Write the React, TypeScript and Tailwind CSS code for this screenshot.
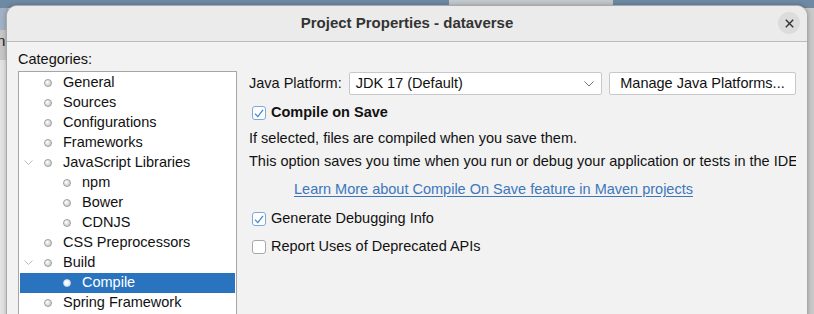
import React from "react";

const font = { fontFamily: '"Liberation Sans", Arial, sans-serif' };

type Node = { label: string; depth: 0 | 1; expandable?: boolean; selected?: boolean };

const nodes: Node[] = [
  { label: "General", depth: 0 },
  { label: "Sources", depth: 0 },
  { label: "Configurations", depth: 0 },
  { label: "Frameworks", depth: 0 },
  { label: "JavaScript Libraries", depth: 0, expandable: true },
  { label: "npm", depth: 1 },
  { label: "Bower", depth: 1 },
  { label: "CDNJS", depth: 1 },
  { label: "CSS Preprocessors", depth: 0 },
  { label: "Build", depth: 0, expandable: true },
  { label: "Compile", depth: 1, selected: true },
  { label: "Spring Framework", depth: 0 },
];

const Bullet = ({ light }: { light?: boolean }) => (
  <span
    className={
      light
        ? "block h-[8px] w-[8px] shrink-0 rounded-full border border-[#c9d8e8] bg-[radial-gradient(circle_at_35%_35%,#ffffff,#e4e9ef)]"
        : "block h-[8px] w-[8px] shrink-0 rounded-full border border-[#9c9c9c] bg-[radial-gradient(circle_at_35%_35%,#ffffff,#bcbcbc)]"
    }
  />
);

const Chevron = () => (
  <svg width="9" height="6" viewBox="0 0 9 6" className="block">
    <path d="M0.5 0.5 L4.5 4.5 L8.5 0.5" fill="none" stroke="#bdbdbd" strokeWidth="1" />
  </svg>
);

const TreeRow = ({ node }: { node: Node }) => (
  <div
    className={
      "flex h-[20px] items-center " +
      (node.selected ? "bg-[#2a74bf] text-white" : "text-[#111]")
    }
  >
    <span className="flex w-[24px] shrink-0 pl-[4px]">{node.expandable ? <Chevron /> : null}</span>
    <span className={node.depth === 1 ? "ml-[19px] flex" : "flex"}>
      <Bullet light={node.selected} />
    </span>
    <span className="ml-[11px] whitespace-nowrap">{node.label}</span>
  </div>
);

const CheckBox = ({ checked }: { checked?: boolean }) => (
  <span
    className={
      "flex h-[14px] w-[14px] items-center justify-center rounded-[3px] border bg-white " +
      (checked ? "border-[#7aa8dc]" : "border-[#a8a8a8]")
    }
  >
    {checked && (
      <svg width="10" height="9" viewBox="0 0 10 9">
        <path d="M1 4.6 L3.8 7.6 L9 0.8" fill="none" stroke="#3f86d6" strokeWidth="1.3" />
      </svg>
    )}
  </span>
);

export default function App() {
  return (
    <div className="relative h-[314px] w-[814px] overflow-hidden bg-[#cfcfcf] text-[14.5px]" style={font}>
      {/* desktop behind the dialog */}
      <div className="absolute left-0 top-0 h-[8px] w-full bg-[#6e89a4]" />
      <div className="absolute left-[449px] top-0 h-[8px] w-[164px] border-b-2 border-[#2d5f95] bg-[#c3c8cd]" />
      <div className="absolute left-0 top-[8px] h-[22px] w-[8px] bg-[#9fb1c3]" />
      <div className="absolute left-0 top-[30px] h-[30px] w-[8px] bg-[#c6c6c6]">
        <span className="absolute left-[-3px] top-[3px] text-[15px] leading-none text-[#222]">n</span>
      </div>
      <div className="absolute left-0 top-[60px] h-[254px] w-[8px] bg-[#e2e2e2]" />
      <div className="absolute right-0 top-[8px] h-[306px] w-[7px] bg-[#c9c9c9]" />

      {/* dialog window */}
      <div className="absolute left-[6px] top-[5px] flex h-[330px] w-[802px] flex-col overflow-hidden rounded-t-[11px] border border-[#a9a9a9] bg-[#f2f2f2] shadow-[0_0_4px_rgba(0,0,0,0.25)]">
        <div className="relative flex h-[36px] shrink-0 items-center justify-center border-b border-[#bdbdbd] bg-[#ebebeb]">
          <span className="text-[15px] font-bold text-[#333]">Project Properties - dataverse</span>
          <span className="absolute right-[7px] top-[6px] flex h-[22px] w-[22px] items-center justify-center rounded-full bg-[#dcdcdc]">
            <svg width="9" height="9" viewBox="0 0 9 9">
              <path d="M0.8 0.8 L8.2 8.2 M8.2 0.8 L0.8 8.2" stroke="#333" strokeWidth="1.4" />
            </svg>
          </span>
        </div>

        <div className="flex flex-1 gap-[12px] pl-[11px] pr-[11px] pt-[8px]">
          {/* categories */}
          <div className="flex w-[219px] shrink-0 flex-col">
            <div className="h-[18px] leading-[18px] text-[#111]">Categories:</div>
            <div className="mt-[3px] flex-1 border border-[#a6a6a6] bg-white p-px">
              {nodes.map((n) => (
                <TreeRow key={n.label} node={n} />
              ))}
            </div>
          </div>

          {/* compile panel */}
          <div className="flex w-[547px] flex-col overflow-hidden whitespace-nowrap pt-[22px] text-[#111]">
            <div className="flex h-[23px] items-center">
              <span>Java Platform:</span>
              <div className="ml-[7px] flex h-[23px] w-[254px] items-center justify-between rounded-[2px] border border-[#c8c8c8] bg-white pl-[6px] pr-[7px]">
                <span>JDK 17 (Default)</span>
                <svg width="10" height="6" viewBox="0 0 10 6">
                  <path d="M0.5 0.5 L5 5 L9.5 0.5" fill="none" stroke="#777" strokeWidth="1" />
                </svg>
              </div>
              <div className="ml-[7px] flex h-[23px] w-[187px] shrink-0 items-center justify-center rounded-[2px] border border-[#c8c8c8] bg-white">
                Manage Java Platforms...
              </div>
            </div>

            <label className="mt-[8px] flex h-[20px] items-center pl-[3px]">
              <CheckBox checked />
              <span className="ml-[5px] font-bold">Compile on Save</span>
            </label>

            <div className="mt-[5px] h-[20px] leading-[20px]">If selected, files are compiled when you save them.</div>
            <div className="mt-[3px] h-[20px] leading-[20px]">
              This option saves you time when you run or debug your application or tests in the IDE
            </div>

            <div className="mt-[8px] h-[20px] pl-[45px] leading-[20px]">
              <span className="text-[#3c77bc] underline underline-offset-2">
                Learn More about Compile On Save feature in Maven projects
              </span>
            </div>

            <label className="mt-[10px] flex h-[20px] items-center pl-[3px]">
              <CheckBox checked />
              <span className="ml-[5px]">Generate Debugging Info</span>
            </label>

            <label className="mt-[8px] flex h-[20px] items-center pl-[3px]">
              <CheckBox />
              <span className="ml-[5px]">Report Uses of Deprecated APIs</span>
            </label>
          </div>
        </div>
      </div>
    </div>
  );
}
